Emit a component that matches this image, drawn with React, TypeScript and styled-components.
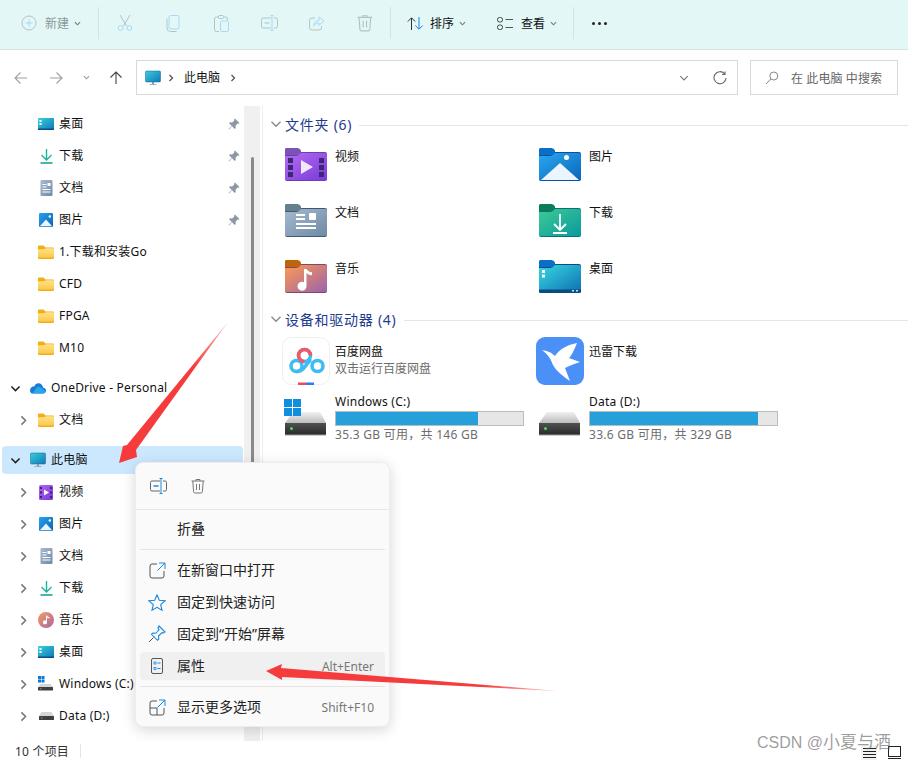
import React from "react";
import styled, { createGlobalStyle } from "styled-components";

const FONT = `"Noto Sans", "Noto Sans CJK SC", sans-serif`;

const Global = createGlobalStyle`
  html, body { margin: 0; padding: 0; background: #fff; }
  body { font-family: ${FONT}; font-size: 12px; color: #111; }
  * { box-sizing: border-box; }
`;

const Window = styled.div`
  position: relative; width: 908px; height: 761px; overflow: hidden;
  display: flex; flex-direction: column; background: #fff;
`;

/* Toolbar */
const Toolbar = styled.div`
  height: 50px; flex: none; display: flex; align-items: center;
  background: #e3f7f7; border-bottom: 1px solid #d5e3e3; padding: 0 0 3px 5px;
`;
const ToolLabelBtn = styled.div<{ $w: number; $pad?: number }>`
  width: ${p => p.$w}px; height: 32px; display: flex; align-items: center; padding-left: ${p => p.$pad ?? 16}px; flex: none;
`;
const ToolLabel = styled.span<{ $off?: boolean; $gap?: number }>`
  margin: 2px 0 0 ${p => p.$gap ?? 7}px; font-size: 12px; line-height: 16px; color: ${p => (p.$off ? "#8b9898" : "#111")};
`;
const ToolIconBtn = styled.div`
  width: 48px; height: 32px; display: flex; align-items: center; justify-content: center; flex: none;
`;
const ToolDivider = styled.div<{ $l: number; $r: number }>`
  width: 1px; height: 32px; background: #d0e4e4; flex: none;
  margin: 0 ${p => p.$r}px 0 ${p => p.$l}px;
`;
const Caret = styled.span`
  margin-left: 5px; display: inline-flex; color: #777;
`;
const Dots = styled.div`
  display: flex; gap: 3px; margin-left: 18px;
`;
const Dot = styled.i`
  width: 3px; height: 3px; border-radius: 50%; background: #222; display: block;
`;

/* Nav */
const NavBar = styled.div`
  height: 56px; flex: none; display: flex; align-items: center; padding: 0 10px 1px 0;
`;
const NavButton = styled.div<{ $w: number }>`
  width: ${p => p.$w}px; height: 24px; display: flex; align-items: center; justify-content: center; flex: none;
`;
const AddressBox = styled.div`
  width: 602px; height: 35px; margin-left: 6px; border: 1px solid #d9d9d9; display: flex; align-items: center;
  padding-left: 8px; background: #fff; flex: none;
`;
const CrumbMark = styled.span`
  display: flex; margin-left: 6px;
`;
const Crumb = styled.span`
  font-size: 12px; color: #111; margin: 0 9px; line-height: 16px;
`;
const AddressEnd = styled.div`
  margin-left: auto; display: flex; align-items: center; gap: 24px; padding-right: 10px;
`;
const SearchBox = styled.div`
  width: 148px; height: 35px; margin-left: 12px; border: 1px solid #d9d9d9; display: flex; align-items: center;
  padding-left: 14px; font-size: 12px; color: #666; flex: none; gap: 12px; white-space: pre; letter-spacing: .1px;
`;

/* Body */
const Body = styled.div`
  flex: 1; min-height: 0; display: flex;
`;
const Sidebar = styled.nav`
  width: 244px; flex: none; padding-top: 2px; overflow: hidden; display: flex; flex-direction: column;
`;
const Row = styled.div<{ $gap?: number; $level: number; $selected?: boolean }>`
  height: 28px; flex: none; margin: ${p => 2 + (p.$gap ?? 0)}px 1px 2px 2px; display: flex; align-items: center;
  border-radius: 4px; background: ${p => (p.$selected ? "#cce8ff" : "transparent")};
  padding-left: ${p => (p.$level ? 14 : 6)}px; position: relative; font-size: 12px; color: #111;
  white-space: nowrap;
`;
const RowChevron = styled.span`
  width: 14px; height: 14px; display: flex; align-items: center; justify-content: center; flex: none;
`;
const RowIcon = styled.span`
  margin-left: 8px; width: 16px; height: 16px; display: flex; align-items: center; justify-content: center; flex: none;
`;
const RowText = styled.span`
  margin-left: 5px; line-height: 16px; letter-spacing: .2px;
`;
const PinSlot = styled.span`
  margin-left: auto; margin-right: 1px; width: 16px; height: 16px; display: flex; align-items: center; justify-content: center;
`;
const Track = styled.div`
  width: 16px; flex: none; background: #f0f0f0; padding: 51px 0 0 7px;
`;
const Thumb = styled.div`
  width: 3px; height: 400px; background: #8a8a8a; border-radius: 2px;
`;
const Main = styled.main`
  flex: 1; margin-left: 2px; border-left: 1px solid #eee; padding: 8px 0 0 22px; min-width: 0;
`;
const GroupHead = styled.div`
  height: 20px; display: flex; align-items: center; position: relative; color: #1e3a8f; font-size: 14px;
  white-space: nowrap; letter-spacing: .75px;
`;
const GroupChevron = styled.span`
  position: absolute; left: -15px; top: 4px; display: flex;
`;
const GroupLine = styled.span`
  flex: 1; height: 1px; background: #e5e5e5; margin-left: 7px; margin-top: 2px;
`;
const Grid = styled.div<{ $top: number; $bottom: number }>`
  display: grid; grid-template-columns: 254px 254px; grid-auto-rows: 56px;
  margin: ${p => p.$top}px 0 ${p => p.$bottom}px;
`;
const Tile = styled.div`
  display: flex; align-items: center;
`;
const TileIcon = styled.div`
  width: 50px; flex: none; display: flex;
`;
const TileBody = styled.div`
  align-self: flex-start; padding-top: 13px; min-width: 0; flex: 1;
`;
const AppBody = styled.div`
  align-self: flex-start; padding-top: 11px; min-width: 0; flex: 1;
`;
const DriveBody = styled.div`
  align-self: flex-start; padding-top: 5px; min-width: 0; flex: 1;
`;
const TileName = styled.div`
  font-size: 12px; line-height: 16px; color: #111;
`;
const DriveName = styled(TileName)`
  letter-spacing: .25px;
`;
const TileSub = styled.div`
  font-size: 12px; line-height: 16px; color: #6d6d6d; margin-top: 1px; white-space: pre;
`;
const DriveSub = styled(TileSub)`
  letter-spacing: .27px;
`;
const Bar = styled.div`
  width: 189px; height: 15px; margin-top: 1px; background: #e6e6e6; border: 1px solid #bcbcbc;
`;
const BarFill = styled.div`
  height: 100%; background: #26a0da;
`;

/* Status */
const StatusBar = styled.div`
  height: 20px; flex: none; display: flex; align-items: center; padding-left: 15px; font-size: 12px; color: #333; letter-spacing: .2px;
  white-space: pre;
`;
const StatusDivider = styled.div`
  width: 1px; height: 14px; background: #e5e5e5; margin-left: 11px;
`;
const ViewToggles = styled.div`
  position: absolute; right: 6px; bottom: 1px; display: flex; gap: 9px; align-items: center;
`;
const ViewBtn = styled.div<{ $on?: boolean }>`
  width: 16px; height: 15px; display: flex; align-items: center; justify-content: center;
  background: ${p => (p.$on ? "#f2f2f2" : "transparent")};
`;
const Watermark = styled.div`
  position: absolute; left: 757px; top: 733px; font-family: "Liberation Sans", "Noto Sans CJK SC", sans-serif; font-size: 16px;
  line-height: 20px; color: rgba(90, 90, 90, .6); white-space: nowrap;
`;
const WatermarkName = styled.span`
  font-size: 17px;
`;

/* Menu */
const Menu = styled.div`
  position: absolute; left: 135px; top: 462px; width: 255px; height: 265px; background: #fafafa;
  border: 1px solid #ededed; border-radius: 8px; box-shadow: 0 3px 14px rgba(0,0,0,.16);
  display: flex; flex-direction: column;
`;
const MenuTop = styled.div`
  height: 47px; flex: none; display: flex; align-items: center; padding-left: 12px; gap: 20px; border-bottom: 1px solid #e6e6e6;
`;
const MenuTopBtn = styled.div`
  width: 20px; height: 20px; display: flex; align-items: center; justify-content: center;
`;
const MenuList = styled.div`
  display: flex; flex-direction: column; padding-top: 3px;
`;
const MenuSep = styled.div`
  height: 1px; background: #e4e4e4; margin: 4px 4px;
`;
const MenuRow = styled.div<{ $hot?: boolean }>`
  height: 28px; margin: 2px 4px; border-radius: 4px; display: flex; align-items: center; padding-left: 8px;
  background: ${p => (p.$hot ? "#f0f0f0" : "transparent")}; font-size: 14px; color: #222;
`;
const MenuIcon = styled.span`
  width: 18px; height: 18px; display: flex; align-items: center; justify-content: center; flex: none;
`;
const MenuLabel = styled.span`
  margin-left: 11px; line-height: 18px; white-space: nowrap;
`;
const MenuKey = styled.span`
  margin-left: auto; margin-right: 11px; font-size: 12px; color: #777; white-space: nowrap;
`;
const ArrowLayer = styled.svg`
  position: absolute; left: 0; top: 0; pointer-events: none;
`;

/* Icons */
const Chev = ({ dir = "down", s = 8, c = "#777", w = 1.2 }: { dir?: "down" | "right"; s?: number; c?: string; w?: number }) => (
  <svg width={s} height={s} viewBox="0 0 8 8" fill="none" stroke={c} strokeWidth={w}>
    {dir === "down" ? <path d="M1 2.5 4 5.5 7 2.5" /> : <path d="M2.5 1 5.5 4 2.5 7" />}
  </svg>
);
const B = "#a8d8f6";
const G = "#b3c3c3";
const Plus = () => (
  <svg width="16" height="16" viewBox="0 0 16 16" fill="none">
    <circle cx="8" cy="8" r="7" stroke="#b4c4c4" />
    <path d="M8 4.500v7M4.500 8h7" stroke={B} />
  </svg>
);
const Cut = () => (
  <svg width="16" height="18" viewBox="0 0 16 18" fill="none" stroke={G}>
    <path d="M3 1l6.600 11M13 1 6.400 12" />
    <circle cx="3.600" cy="14" r="2.400" stroke={B} />
    <circle cx="12.400" cy="14" r="2.400" stroke={B} />
  </svg>
);
const Copy = () => (
  <svg width="14" height="17" viewBox="0 0 14 17" fill="none">
    <rect x="3" y=".5" width="10" height="13.500" rx="2" stroke={B} />
    <path d="M1 3.500v9.500a3.500 3.500 0 0 0 3.500 3.500h6" stroke={G} />
  </svg>
);
const Paste = () => (
  <svg width="15" height="17" viewBox="0 0 15 17" fill="none">
    <path d="M5 2H2.500a2 2 0 0 0-2 2v10.500a2 2 0 0 0 2 2H5M10 2h1.500a2 2 0 0 1 2 2v1" stroke={G} />
    <rect x="4.500" y=".5" width="5" height="3" rx="1" stroke={G} />
    <rect x="6.500" y="6" width="8" height="10.500" rx="1.500" stroke={B} />
  </svg>
);
const Rename = ({ a = B, b = G, dash = B }: { a?: string; b?: string; dash?: string }) => (
  <svg width="17" height="16" viewBox="0 0 17 16" fill="none">
    <path d="M10 3H2a1.500 1.500 0 0 0-1.500 1.500v7A1.500 1.500 0 0 0 2 13h8M13 3h2a1.500 1.500 0 0 1 1.500 1.500v7A1.500 1.500 0 0 1 15 13h-2" stroke={b} />
    <path d="M3.500 8h5" stroke={dash} strokeWidth="1.500" />
    <path d="M9.500.5h3M11 .5v15M9.500 15.500h3" stroke={a} />
  </svg>
);
const Share = () => (
  <svg width="16" height="15" viewBox="0 0 16 15" fill="none">
    <path d="M6 2H3a2.500 2.500 0 0 0-2.500 2.500v7A2.500 2.500 0 0 0 3 14h7a2.500 2.500 0 0 0 2.500-2.500V10" stroke={G} />
    <path d="M10 .8 15 5l-5 4.200V6.800c-2.500 0-4 .8-5 3 0-3.500 2-5.300 5-5.500z" stroke={B} />
  </svg>
);
const Trash = ({ c = G, size = 18 }: { c?: string; size?: number }) => (
  <svg width={size * 14 / 16} height={size} viewBox="0 0 14 16" fill="none" stroke={c}>
    <path d="M.5 3h13M5 3V1.500h4V3M1.800 3l.8 10.700a1.500 1.500 0 0 0 1.500 1.300h5.800a1.500 1.500 0 0 0 1.500-1.300L12.200 3M5.500 6v6M8.500 6v6" />
  </svg>
);
const Sort = () => (
  <svg width="17" height="13" viewBox="0 0 17 13" fill="none">
    <path d="M4.500 13V1M.8 4.500 4.500.8 8.200 4.500" stroke="#333" />
    <path d="M12 0v12M8.300 8.500 12 12.200l3.700-3.700" stroke="#1c86d8" />
  </svg>
);
const ViewIcon = () => (
  <svg width="16" height="13" viewBox="0 0 16 13" fill="none" stroke="#444">
    <rect x=".5" y=".5" width="5" height="4.500" rx="2" />
    <rect x=".5" y="8" width="5" height="4.500" rx="2" />
    <path d="M8.500 2.500H16M8.500 10.500H16" stroke="#555" />
  </svg>
);
const Arrow = ({ dir, c }: { dir: "left" | "right" | "up"; c: string }) => {
  const d = dir === "left" ? "M13 7H1M6.500 1.500 1 7l5.500 5.500" : dir === "right" ? "M1 7h12M7.500 1.500 13 7l-5.500 5.500" : "M7 13V1M1.500 6.500 7 1l5.500 5.500";
  return (
    <svg width="14" height="14" viewBox="0 0 14 14" fill="none" stroke={c} strokeWidth="1.100">
      <path d={d} />
    </svg>
  );
};
const Refresh = () => (
  <svg width="14" height="14" viewBox="0 0 14 14" fill="none" stroke="#666" strokeWidth="1.100">
    <path d="M11.500 2.700A6 6 0 1 0 13 7M12 .5v3H9" />
  </svg>
);
const SearchIcon = () => (
  <svg width="14" height="14" viewBox="0 0 14 14" fill="none" stroke="#888">
    <circle cx="8.800" cy="5" r="4" />
    <path d="M5.800 8 1 13" />
  </svg>
);
const Monitor = ({ id }: { id: string }) => (
  <svg width="16" height="16" viewBox="0 0 16 16">
    <defs>
      <linearGradient id={id} x1="0" y1="0" x2="1" y2="1">
        <stop offset="0" stopColor="#33d0dc" />
        <stop offset="1" stopColor="#1476b8" />
      </linearGradient>
    </defs>
    <rect x=".5" y="1" width="15" height="11" rx="1" fill={`url(#${id})`} stroke="#14608f" strokeWidth=".5" />
    <path d="M7 12h2v2H7zM4.500 14h7v.8h-7z" fill="#8a98a4" />
  </svg>
);
const Desk = ({ id }: { id: string }) => (
  <svg width="16" height="14" viewBox="0 0 16 14">
    <defs>
      <linearGradient id={id} x1="0" y1="0" x2="1" y2="1">
        <stop offset="0" stopColor="#35d3de" />
        <stop offset="1" stopColor="#1274b6" />
      </linearGradient>
    </defs>
    <rect width="16" height="12" y="1" rx="1" fill={`url(#${id})`} />
    <rect y="11.500" width="16" height="1.500" fill="#0b4f82" />
    <path d="M1.500 3h2v2h-2zM1.500 6h2v2h-2z" fill="#fff" />
  </svg>
);
const Down = () => (
  <svg width="13" height="15" viewBox="0 0 13 15" fill="none" stroke="#1fb39a" strokeWidth="1.400">
    <path d="M6.500 0v10.500M1.500 6l5 5 5-5" />
    <path d="M.5 14h12" stroke="#18a890" strokeWidth="1.600" />
  </svg>
);
const Doc = ({ id }: { id: string }) => (
  <svg width="13" height="16" viewBox="0 0 13 16">
    <defs>
      <linearGradient id={id} x1="0" y1="0" x2="1" y2="1">
        <stop offset="0" stopColor="#a8bcd0" />
        <stop offset="1" stopColor="#6f8aa6" />
      </linearGradient>
    </defs>
    <rect width="12" height="16" x=".5" rx="1" fill={`url(#${id})`} />
    <path d="M2.500 4h4v1h-4zM2.500 6.500h4v1h-4zM2.500 9h8v1h-8zM2.500 11.500h8v1h-8zM7.500 3h3v3h-3z" fill="#fff" />
  </svg>
);
const Pic = ({ id }: { id: string }) => (
  <svg width="14" height="14" viewBox="0 0 14 14">
    <defs>
      <linearGradient id={id} x1="0" y1="0" x2="1" y2="1">
        <stop offset="0" stopColor="#2aa3ee" />
        <stop offset="1" stopColor="#0a63b8" />
      </linearGradient>
    </defs>
    <rect width="14" height="14" rx="1" fill={`url(#${id})`} />
    <path d="M.8 13.200 7 6.500l6.200 6.700z" fill="#eaf5fd" />
    <circle cx="10.800" cy="3.500" r="1.200" fill="#fff" />
  </svg>
);
const Vid = ({ id }: { id: string }) => (
  <svg width="14" height="15" viewBox="0 0 14 15">
    <defs>
      <linearGradient id={id} x1="0" y1="0" x2="1" y2="1">
        <stop offset="0" stopColor="#b264ef" />
        <stop offset="1" stopColor="#7a38d8" />
      </linearGradient>
    </defs>
    <rect width="14" height="15" rx="1.500" fill={`url(#${id})`} />
    <path d="M1 2h2v2H1zM1 6.500h2v2H1zM1 11h2v2H1zM11 2h2v2h-2zM11 6.500h2v2h-2zM11 11h2v2h-2z" fill="#3d2270" />
    <path d="M5 4.500 10 7.500 5 10.500z" fill="#fff" />
  </svg>
);
const Music = ({ id }: { id: string }) => (
  <svg width="16" height="16" viewBox="0 0 16 16">
    <defs>
      <linearGradient id={id} x1="0" y1="0" x2="1" y2="1">
        <stop offset="0" stopColor="#f99a58" />
        <stop offset="1" stopColor="#a868a8" />
      </linearGradient>
    </defs>
    <circle cx="8" cy="8" r="8" fill={`url(#${id})`} />
    <path d="M8 3.500h1v6.800a2 2 0 1 1-1-1.700zM9 3.500c.5 1.200 1.500 1.500 2.500 1.800v1.200C10.300 6.300 9.500 6 9 5.300z" fill="#fff" />
  </svg>
);
const SmallFolder = ({ id }: { id: string }) => (
  <svg width="16" height="14" viewBox="0 0 16 14">
    <defs>
      <linearGradient id={id} x1="0" y1="0" x2="0" y2="1">
        <stop offset="0" stopColor="#ffe28a" />
        <stop offset="1" stopColor="#fdc94c" />
      </linearGradient>
    </defs>
    <path d="M0 1.500A1 1 0 0 1 1 .5h4.500L7.500 2.500H15a1 1 0 0 1 1 1V13a1 1 0 0 1-1 1H1a1 1 0 0 1-1-1z" fill="#f2ad1b" />
    <path d="M0 4.500 7 4l1-.8h7a1 1 0 0 1 1 1V12.500H0z" fill={`url(#${id})`} />
  </svg>
);
const OneDrive = () => (
  <svg width="17" height="11" viewBox="0 0 17 11">
    <path d="M2 10.800h11.500c2 0 3.500-1 3.500-3s-1.500-3-3-3C13.500 2 11.500 0 9 0 7 0 5.500 1 4.800 3 2 3 0 5 0 7.500c0 1.500.8 2.700 2 3.300z" fill="#1a7ad8" />
    <path d="M7 4.500c1-1 3-1.200 4.500 0l5 4c-.3 1.500-1.500 2.300-3 2.300H3z" fill="#28a8ea" />
  </svg>
);
const SmallDisk = () => (
  <svg width="15" height="8" viewBox="0 0 15 8">
    <path d="M2.500 0h10L15 4H0z" fill="#d4d6d8" />
    <rect y="4" width="15" height="4" rx=".5" fill="#404040" />
    <rect x="2" y="5.500" width="1.500" height="1" fill="#40d060" />
  </svg>
);
const WinSmall = () => (
  <svg width="16" height="16" viewBox="0 0 16 16">
    <path d="M0 0h3v3H0zM3.500 0h3v3h-3zM0 3.500h3v3H0zM3.500 3.500h3v3h-3z" fill="#0a78d6" />
    <path d="M2.500 8h10L15 11H0z" fill="#d4d6d8" />
    <rect y="11" width="15" height="3.500" rx=".5" fill="#404040" />
    <rect x="2" y="12.300" width="1.500" height="1" fill="#40d060" />
  </svg>
);
const Pin = () => (
  <svg width="12" height="12" viewBox="0 0 12 12" fill="#8d98a4">
    <path d="M7 .5 11.500 5l-1 .8-.8-.2L7.500 7.800 7.800 10 6.800 11 4 8.200 1 11.500.5 11 3.800 8 1 5.200 2 4.200l2.200.3L6.400 2.300 6.200 1.500z" />
  </svg>
);

type FolderProps = { id: string; back: string; from: string; to: string; edge: string; children?: React.ReactNode };
const BigFolder = ({ id, back, from, to, edge, children }: FolderProps) => (
  <svg width="42" height="33" viewBox="0 0 42 33">
    <defs>
      <linearGradient id={id} x1="0" y1="0" x2="1" y2="1">
        <stop offset="0" stopColor={from} />
        <stop offset="1" stopColor={to} />
      </linearGradient>
    </defs>
    <path d="M0 2a2 2 0 0 1 2-2h10l4 4h24a2 2 0 0 1 2 2v25a2 2 0 0 1-2 2H2a2 2 0 0 1-2-2z" fill={edge} />
    <path d="M0 2a2 2 0 0 1 2-2h10c2 0 3 1 4 2.500V5.500c-1 1-2 1.500-4 1.500H0z" fill={back} />
    <path d="M0 8h11c2 0 3-1 4.500-2.500 .5-.5 1-.5 1.500-.5h23a2 2 0 0 1 2 2v24a1 1 0 0 1-1 1H1a1 1 0 0 1-1-1z" fill={`url(#${id})`} />
    {children}
  </svg>
);
const DriveWrap = styled.svg`
  margin-left: -1px;
`;
const Drive = ({ win }: { win?: boolean }) => (
  <DriveWrap width="45" height="37" viewBox="0 0 45 37">
    <defs>
      <linearGradient id={win ? "hddc" : "hddd"} x1="0" y1="0" x2="0" y2="1">
        <stop offset="0" stopColor="#f0f0f0" />
        <stop offset="1" stopColor="#bdbdbd" />
      </linearGradient>
      <linearGradient id={win ? "hddc2" : "hddd2"} x1="0" y1="0" x2="0" y2="1">
        <stop offset="0" stopColor="#505050" />
        <stop offset="1" stopColor="#2a2a2a" />
      </linearGradient>
    </defs>
    <path d="M9 13h27l6 11H1z" fill={`url(#${win ? "hddc" : "hddd"})`} />
    <rect x="1" y="24" width="41" height="12" fill={`url(#${win ? "hddc2" : "hddd2"})`} />
    <rect x="1" y="35.500" width="41" height="1" fill="#999" />
    <rect x="6" y="28" width="3" height="3" rx="1.500" fill="#3ee25a" />
    {win && <path d="M0 0h8v8H0zM9 0h8v8H9zM0 9h8v8H0zM9 9h8v8H9z" fill="#0f8fe0" />}
  </DriveWrap>
);
const AppSvg = styled.svg`
  margin-left: -3px;
`;
const Baidu = () => (
  <AppSvg width="48" height="48" viewBox="0 0 48 48" fill="none">
    <rect x=".5" y=".5" width="47" height="47" rx="9" fill="#fff" stroke="#f0f0f0" />
    <circle cx="14.500" cy="29" r="5.500" stroke="#3cbcf4" strokeWidth="3.500" />
    <circle cx="35.500" cy="29" r="5.500" stroke="#3cbcf4" strokeWidth="3.500" />
    <path d="M14.500 34.500c5 0 7-2.500 9-5.500s4-5.500 6-5.500" stroke="#3cbcf4" strokeWidth="3.500" />
    <circle cx="22.500" cy="18.500" r="6" stroke="#3cbcf4" strokeWidth="3.500" />
    <path d="M22.500 24.500a6 6 0 1 1 6-6" stroke="#f2576a" strokeWidth="3.500" />
    <rect x="16" y="45.500" width="8" height="2.500" fill="#ef4a5c" />
    <rect x="24" y="45.500" width="8" height="2.500" fill="#2a7cf0" />
  </AppSvg>
);
const Xunlei = () => (
  <AppSvg width="48" height="48" viewBox="0 0 48 48">
    <rect width="48" height="48" rx="9" fill="#4a90f7" />
    <path d="M6 13 C11 14 15 15 19 19 C23 13 30 8 41 6 C38 13 36 18 33 21 L44 25 C38 27 33 29 29 31 L34 44 C27 39 21 35 17 28 C15 23 13 18 6 13 Z" fill="#fff" />
  </AppSvg>
);
const MenuOpen = ({ more }: { more?: boolean }) => (
  <svg width="17" height="17" viewBox="0 0 17 17" fill="none">
    <path d="M8 2H3a2 2 0 0 0-2 2v10a2 2 0 0 0 2 2h10a2 2 0 0 0 2-2V9" stroke="#555" />
    {more && <path d="M1 9h7v7" stroke="#555" />}
    <path d="M10 1h6v6M16 1 8.500 8.500" stroke="#1b87dc" />
  </svg>
);
const Star = () => (
  <svg width="18" height="17" viewBox="0 0 18 17" fill="none" stroke="#1b87dc" strokeWidth="1.100">
    <path d="M9 1l2.300 5.200 5.700.6-4.300 3.800 1.300 5.600L9 13.300 4 16.200l1.300-5.600L1 6.800l5.700-.6z" />
  </svg>
);
const PinLine = () => (
  <svg width="18" height="18" viewBox="0 0 18 18" fill="none">
    <path d="M11 1l6 6-1.500 1-1.500-.3-3.500 3.300.3 3-1.300 1.300-6-6 1.300-1.300 3 .3 3.300-3.500L10 3z" stroke="#1b87dc" strokeWidth="1.100" />
    <path d="M5.500 12.500 1 17" stroke="#555" />
  </svg>
);
const Props = () => (
  <svg width="12" height="16" viewBox="0 0 12 16" fill="none">
    <rect x=".5" y=".5" width="11" height="15" rx="1.500" stroke="#555" />
    <rect x="3" y="4" width="2" height="2" stroke="#1b87dc" strokeWidth=".8" />
    <rect x="3" y="9.500" width="2" height="2" stroke="#1b87dc" strokeWidth=".8" />
    <path d="M6.500 5h3M6.500 10.500h3" stroke="#1b87dc" />
  </svg>
);

type NavItem = { text: string; icon: React.ReactNode; level: 0 | 1 | 2; gap?: number; pin?: boolean; selected?: boolean };
const navItems: NavItem[] = [
  { text: "桌面", icon: <Desk id="n1" />, level: 2, pin: true },
  { text: "下载", icon: <Down />, level: 2, pin: true },
  { text: "文档", icon: <Doc id="n2" />, level: 2, pin: true },
  { text: "图片", icon: <Pic id="n3" />, level: 2, pin: true },
  { text: "1.下载和安装Go", icon: <SmallFolder id="n4" />, level: 2 },
  { text: "CFD", icon: <SmallFolder id="n5" />, level: 2 },
  { text: "FPGA", icon: <SmallFolder id="n6" />, level: 2 },
  { text: "M10", icon: <SmallFolder id="n7" />, level: 2 },
  { text: "OneDrive - Personal", icon: <OneDrive />, level: 0, gap: 8 },
  { text: "文档", icon: <SmallFolder id="n9" />, level: 1 },
  { text: "此电脑", icon: <Monitor id="n10" />, level: 0, gap: 8, selected: true },
  { text: "视频", icon: <Vid id="n11" />, level: 1 },
  { text: "图片", icon: <Pic id="n12" />, level: 1 },
  { text: "文档", icon: <Doc id="n13" />, level: 1 },
  { text: "下载", icon: <Down />, level: 1 },
  { text: "音乐", icon: <Music id="n14" />, level: 1 },
  { text: "桌面", icon: <Desk id="n15" />, level: 1 },
  { text: "Windows (C:)", icon: <WinSmall />, level: 1 },
  { text: "Data (D:)", icon: <SmallDisk />, level: 1 },
];

const folders: { name: string; icon: React.ReactNode }[] = [
  {
    name: "视频",
    icon: (
      <BigFolder id="f1" back="#7a52b8" from="#b56cf2" to="#7a3ad8" edge="#6b3fb0">
        <path d="M3 10h5v5H3zM3 17h5v5H3zM3 24h5v5H3zM34 10h5v5h-5zM34 17h5v5h-5zM34 24h5v5h-5z" fill="#3f2575" />
        <path d="M16 12 28 19 16 26z" fill="#f0e8fb" />
      </BigFolder>
    ),
  },
  {
    name: "图片",
    icon: (
      <BigFolder id="f2" back="#0a6fc8" from="#2aa8f0" to="#0a66bc" edge="#07539c">
        <path d="M2 32 21 15 40 32z" fill="#eaf5fd" />
        <circle cx="27.500" cy="9.500" r="2.500" fill="#fff" />
      </BigFolder>
    ),
  },
  {
    name: "文档",
    icon: (
      <BigFolder id="f3" back="#64808f" from="#a4bad0" to="#6f8aa4" edge="#3f5a72">
        <path d="M11 10h9v2H11zM11 14h9v2H11zM11 19h20v2H11zM11 23h20v2H11z" fill="#fff" />
        <rect x="24" y="9" width="7" height="7" rx="1" fill="#fff" />
      </BigFolder>
    ),
  },
  {
    name: "下载",
    icon: (
      <BigFolder id="f4" back="#0c7c5c" from="#3ccb94" to="#0a9a9e" edge="#0b7076">
        <path d="M21 10v16M15 20l6 6 6-6" fill="none" stroke="#fff" strokeWidth="1.800" />
        <path d="M14 29h14" stroke="#fff" strokeWidth="2" />
      </BigFolder>
    ),
  },
  {
    name: "音乐",
    icon: (
      <BigFolder id="f5" back="#c0640c" from="#ff9a50" to="#9a62ae" edge="#7c4a66">
        <path d="M19 9h2.500v17a4.500 4.500 0 1 1-2.500-3.800zM21.500 9c1 2 3 3 5.500 3.200v3c-2.500-.2-4.500-1-5.500-2.500z" fill="#fff" />
      </BigFolder>
    ),
  },
  {
    name: "桌面",
    icon: (
      <BigFolder id="f6" back="#0a6fc8" from="#38d8e0" to="#0d70b4" edge="#0a4c7e">
        <path d="M3 10h3v3H3zM3 14.500h3v3H3z" fill="#fff" />
        <rect y="29.500" width="42" height="3" fill="#0a4c7e" />
        <path d="M33 30h2v1.500h-2zM37 30h2v1.500h-2z" fill="#cfe4f0" />
      </BigFolder>
    ),
  },
];

export default function App() {
  return (
    <Window>
      <Global />
      <Toolbar>
        <ToolLabelBtn $w={93}>
          <Plus />
          <ToolLabel $off $gap={8}>新建</ToolLabel>
          <Caret><Chev s={7} /></Caret>
        </ToolLabelBtn>
        <ToolDivider $l={0} $r={2} />
        <ToolIconBtn><Cut /></ToolIconBtn>
        <ToolIconBtn><Copy /></ToolIconBtn>
        <ToolIconBtn><Paste /></ToolIconBtn>
        <ToolIconBtn><Rename /></ToolIconBtn>
        <ToolIconBtn><Share /></ToolIconBtn>
        <ToolIconBtn><Trash /></ToolIconBtn>
        <ToolDivider $l={1} $r={0} />
        <ToolLabelBtn $w={90}>
          <Sort />
          <ToolLabel $gap={6}>排序</ToolLabel>
          <Caret><Chev s={7} /></Caret>
        </ToolLabelBtn>
        <ToolLabelBtn $w={92}>
          <ViewIcon />
          <ToolLabel $gap={8}>查看</ToolLabel>
          <Caret><Chev s={7} /></Caret>
        </ToolLabelBtn>
        <ToolDivider $l={0} $r={0} />
        <Dots><Dot /><Dot /><Dot /></Dots>
      </Toolbar>

      <NavBar>
        <NavButton $w={42}><Arrow dir="left" c="#a0a0a0" /></NavButton>
        <NavButton $w={28}><Arrow dir="right" c="#a0a0a0" /></NavButton>
        <NavButton $w={32}><Chev s={7} c="#999" /></NavButton>
        <NavButton $w={28}><Arrow dir="up" c="#444" /></NavButton>
        <AddressBox>
          <Monitor id="addr" />
          <CrumbMark><Chev dir="right" c="#555" w={1.3} /></CrumbMark>
          <Crumb>此电脑</Crumb>
          <Chev dir="right" c="#555" w={1.3} />
          <AddressEnd>
            <Chev s={10} c="#777" w={.9} />
            <Refresh />
          </AddressEnd>
        </AddressBox>
        <SearchBox>
          <SearchIcon />
          <span>在 此电脑 中搜索</span>
        </SearchBox>
      </NavBar>

      <Body>
        <Sidebar>
          {navItems.map((it, i) => (
            <Row key={i} $level={it.level} $gap={it.gap} $selected={it.selected}>
              <RowChevron>
                {it.level === 0 && <Chev s={11} c="#222" w={1.1} />}
                {it.level === 1 && <Chev dir="right" s={11} c="#777" w={1.1} />}
              </RowChevron>
              <RowIcon>{it.icon}</RowIcon>
              <RowText>{it.text}</RowText>
              {it.pin && <PinSlot><Pin /></PinSlot>}
            </Row>
          ))}
        </Sidebar>
        <Track><Thumb /></Track>
        <Main>
          <GroupHead>
            <GroupChevron><Chev s={12} c="#888" w={.9} /></GroupChevron>
            文件夹 (6)
            <GroupLine />
          </GroupHead>
          <Grid $top={2} $bottom={5}>
            {folders.map(f => (
              <Tile key={f.name}>
                <TileIcon>{f.icon}</TileIcon>
                <TileBody><TileName>{f.name}</TileName></TileBody>
              </Tile>
            ))}
          </Grid>
          <GroupHead>
            <GroupChevron><Chev s={12} c="#888" w={.9} /></GroupChevron>
            设备和驱动器 (4)
            <GroupLine />
          </GroupHead>
          <Grid $top={4} $bottom={0}>
            <Tile>
              <TileIcon><Baidu /></TileIcon>
              <AppBody>
                <TileName>百度网盘</TileName>
                <TileSub>双击运行百度网盘</TileSub>
              </AppBody>
            </Tile>
            <Tile>
              <TileIcon><Xunlei /></TileIcon>
              <AppBody><TileName>迅雷下载</TileName></AppBody>
            </Tile>
            <Tile>
              <TileIcon><Drive win /></TileIcon>
              <DriveBody>
                <DriveName>Windows (C:)</DriveName>
                <Bar><BarFill style={{ width: "76%" }} /></Bar>
                <DriveSub>35.3 GB 可用，共 146 GB</DriveSub>
              </DriveBody>
            </Tile>
            <Tile>
              <TileIcon><Drive /></TileIcon>
              <DriveBody>
                <DriveName>Data (D:)</DriveName>
                <Bar><BarFill style={{ width: "90%" }} /></Bar>
                <DriveSub>33.6 GB 可用，共 329 GB</DriveSub>
              </DriveBody>
            </Tile>
          </Grid>
        </Main>
      </Body>

      <StatusBar>
        10 个项目
        <StatusDivider />
      </StatusBar>
      <ViewToggles>
        <ViewBtn $on>
          <svg width="13" height="12" viewBox="0 0 13 12" fill="none" stroke="#222"><path d="M0 1.500h13M0 4.500h13M0 7.500h13M0 10.500h13" /></svg>
        </ViewBtn>
        <ViewBtn>
          <svg width="13" height="13" viewBox="0 0 13 13" fill="none" stroke="#222"><rect x=".5" y=".5" width="12" height="10" /><path d="M0 12.500h13" /></svg>
        </ViewBtn>
      </ViewToggles>
      <Watermark>CSDN @<WatermarkName>小夏与酒</WatermarkName></Watermark>

      <Menu>
        <MenuTop>
          <MenuTopBtn><Rename a="#1b87dc" b="#666" dash="#1b87dc" /></MenuTopBtn>
          <MenuTopBtn><Trash c="#777" size={16} /></MenuTopBtn>
        </MenuTop>
        <MenuList>
          <MenuRow>
            <MenuIcon />
            <MenuLabel>折叠</MenuLabel>
          </MenuRow>
          <MenuSep />
          <MenuRow><MenuIcon><MenuOpen /></MenuIcon><MenuLabel>在新窗口中打开</MenuLabel></MenuRow>
          <MenuRow><MenuIcon><Star /></MenuIcon><MenuLabel>固定到快速访问</MenuLabel></MenuRow>
          <MenuRow><MenuIcon><PinLine /></MenuIcon><MenuLabel>固定到“开始”屏幕</MenuLabel></MenuRow>
          <MenuRow $hot><MenuIcon><Props /></MenuIcon><MenuLabel>属性</MenuLabel><MenuKey>Alt+Enter</MenuKey></MenuRow>
          <MenuSep />
          <MenuRow><MenuIcon><MenuOpen more /></MenuIcon><MenuLabel>显示更多选项</MenuLabel><MenuKey>Shift+F10</MenuKey></MenuRow>
        </MenuList>
      </Menu>

      <ArrowLayer width="908" height="761" viewBox="0 0 908 761">
        <defs>
          <linearGradient id="arrowA" gradientUnits="userSpaceOnUse" x1="228" y1="322" x2="195" y2="368">
            <stop offset="0" stopColor="#ffc0c0" />
            <stop offset="1" stopColor="#f53b3b" />
          </linearGradient>
          <linearGradient id="arrowB" gradientUnits="userSpaceOnUse" x1="558" y1="690" x2="480" y2="684">
            <stop offset="0" stopColor="#ffc0c0" />
            <stop offset="1" stopColor="#f53b3b" />
          </linearGradient>
        </defs>
        <path d="M228 322 136 450 137 457 119 463 123 446 127 445z" fill="url(#arrowA)" />
        <path d="M266 671 282 664 281 668 558 691 282 677 282 680z" fill="url(#arrowB)" />
      </ArrowLayer>
    </Window>
  );
}
